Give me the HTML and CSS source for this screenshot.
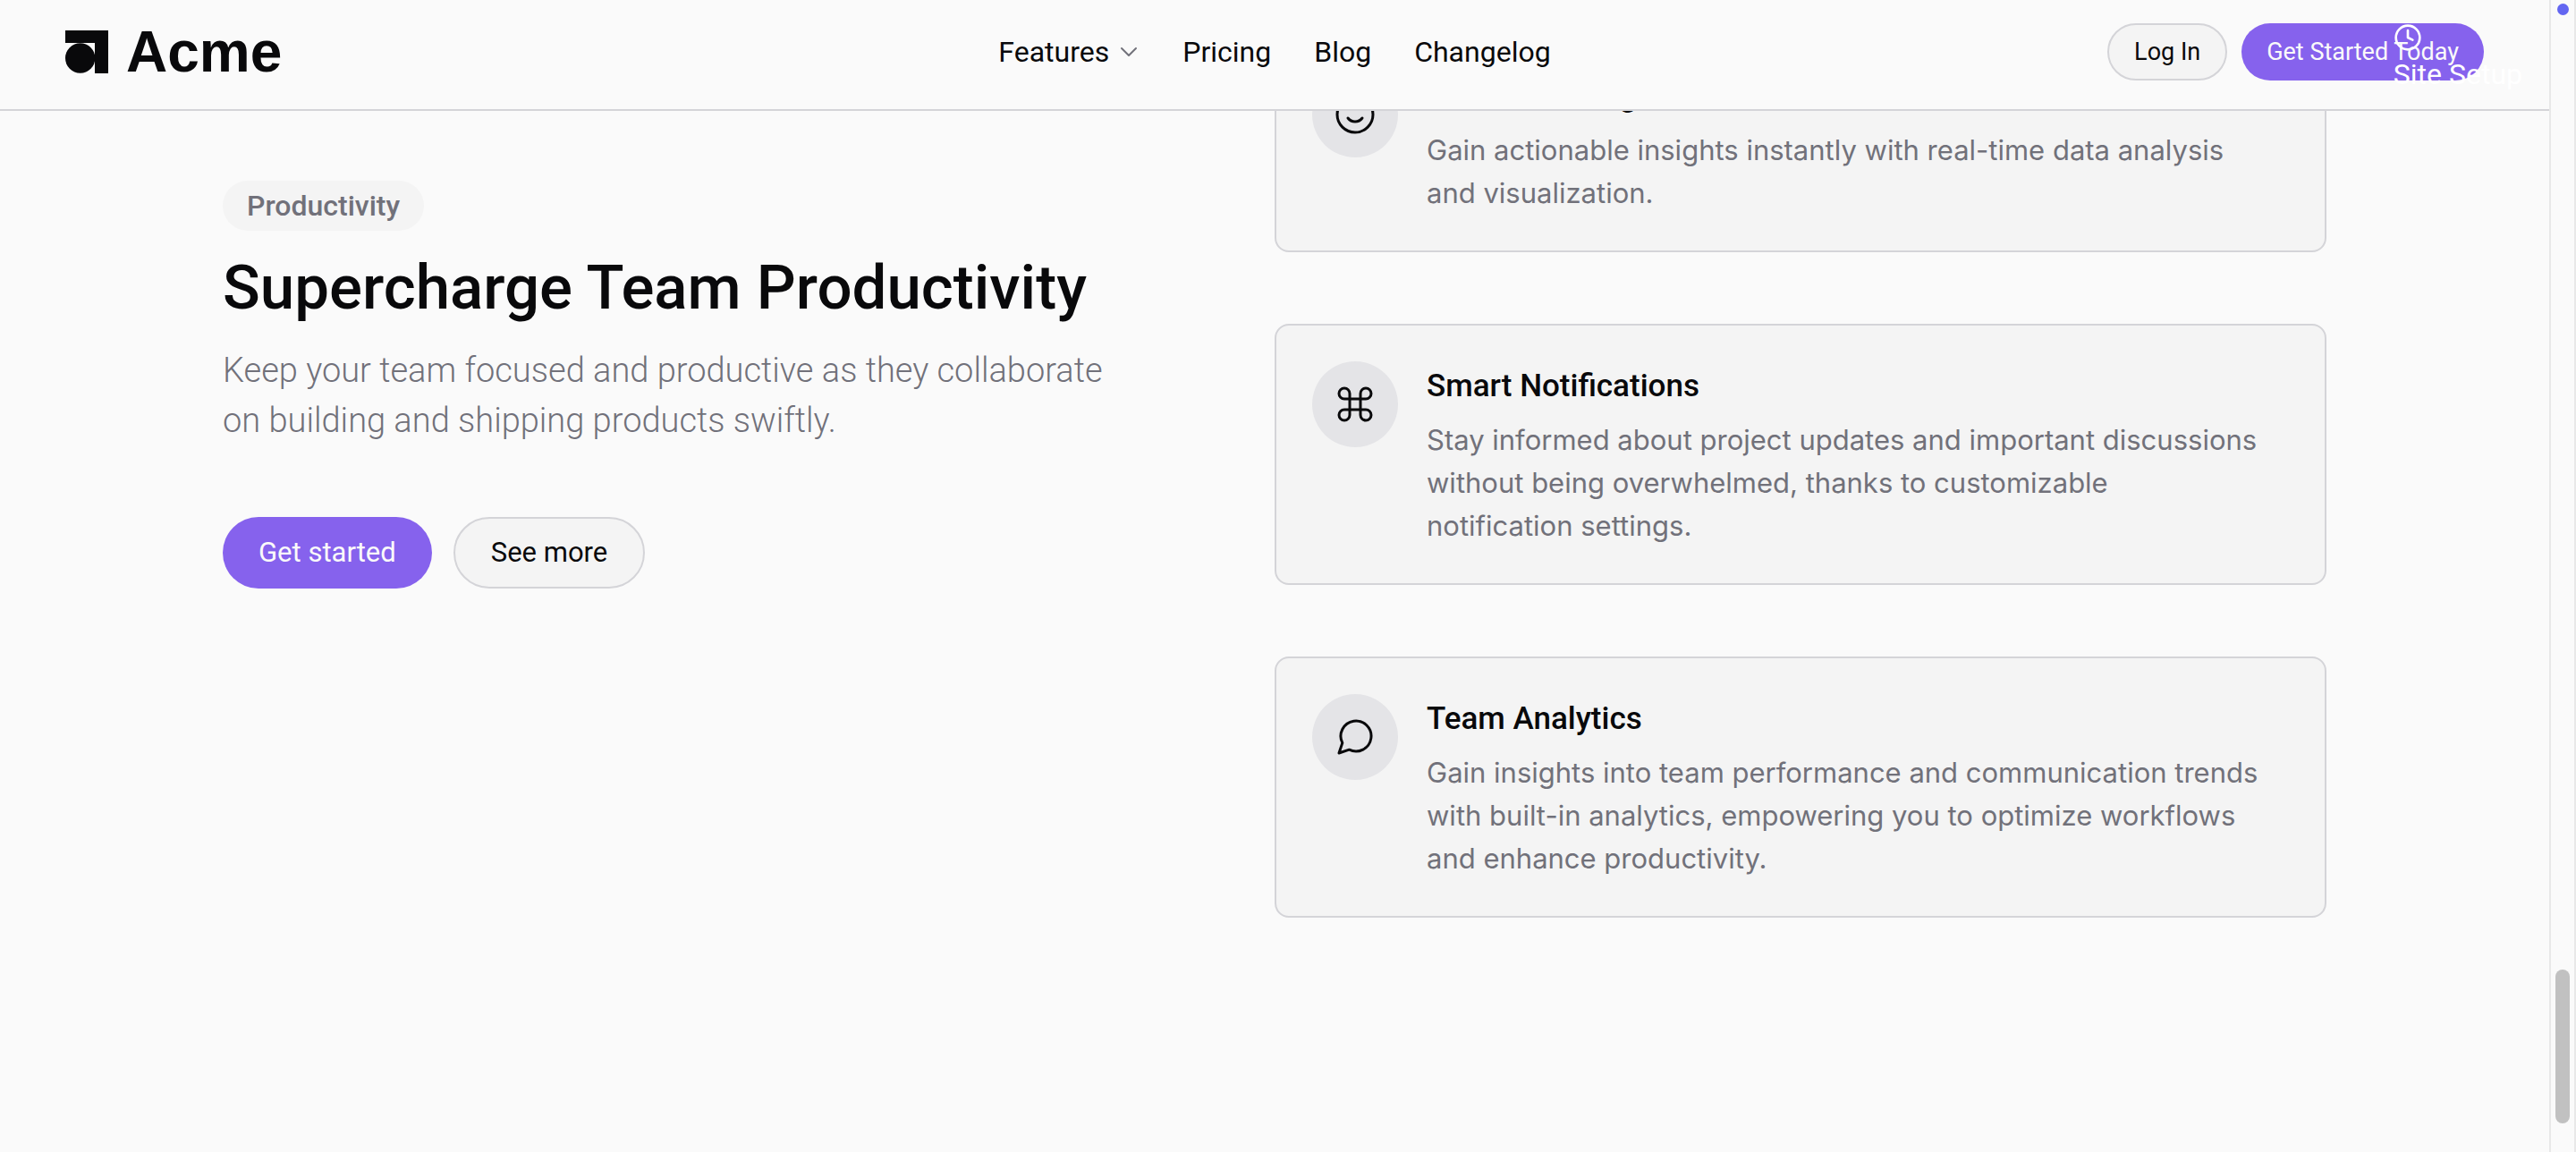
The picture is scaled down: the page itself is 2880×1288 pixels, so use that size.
FILE: index.html
```html
<!DOCTYPE html>
<html lang="en">
<head>
<meta charset="utf-8">
<meta name="viewport" content="width=device-width, initial-scale=1">
<title>Acme</title>
<link rel="stylesheet" href="styles.css">
</head>
<body>
<div class="page">
  <header class="header">
    <a class="brand" href="#">
      <svg class="brand-mark" viewBox="0 0 48 48" aria-hidden="true"><path d="M0 0h48v48H33V14H0z"/><circle cx="16.700" cy="31" r="16.700"/></svg>
      <span>Acme</span>
    </a>
    <nav class="nav">
      <button class="nav-item" type="button">Features
        <svg class="chevron" viewBox="0 0 24 24" aria-hidden="true"><path d="M4 8l8 8 8-8"/></svg>
      </button>
      <a class="nav-item" href="#">Pricing</a>
      <a class="nav-item" href="#">Blog</a>
      <a class="nav-item" href="#">Changelog</a>
    </nav>
    <div class="actions">
      <button class="btn btn-small btn-outline" type="button">Log In</button>
      <button class="btn btn-small btn-primary" type="button">Get Started Today</button>
    </div>
    <a class="site-setup" href="#">
      <svg class="clock" viewBox="0 0 24 24" aria-hidden="true"><circle cx="12" cy="12" r="10"/><path d="M12 6v6l4 2"/></svg>
      <span>Site Setup</span>
    </a>
  </header>

  <main class="feature">
    <section class="intro">
      <span class="badge">Productivity</span>
      <h1 class="title">Supercharge Team Productivity</h1>
      <p class="lead">Keep your team focused and productive as they collaborate on building and shipping products swiftly.</p>
      <div class="intro-actions">
        <button class="btn btn-primary" type="button">Get started</button>
        <button class="btn btn-outline" type="button">See more</button>
      </div>
    </section>

    <section class="cards">
      <article class="card">
        <div class="card-icon"><svg viewBox="0 0 24 24" aria-hidden="true"><circle cx="12" cy="12" r="10"/><path d="M8 14s1.500 2 4 2 4-2 4-2M9 9h.01M15 9h.01"/></svg></div>
        <div class="card-body">
          <h2>Real-time Insights</h2>
          <p>Gain actionable insights instantly with real-time data analysis and visualization.</p>
        </div>
      </article>
      <article class="card">
        <div class="card-icon"><svg viewBox="0 0 24 24" aria-hidden="true"><path d="M15 6v12a3 3 0 1 0 3-3H6a3 3 0 1 0 3 3V6a3 3 0 1 0-3 3h12a3 3 0 1 0-3-3"/></svg></div>
        <div class="card-body">
          <h2>Smart Notifications</h2>
          <p>Stay informed about project updates and important discussions without being overwhelmed, thanks to customizable notification settings.</p>
        </div>
      </article>
      <article class="card">
        <div class="card-icon"><svg viewBox="0 0 24 24" aria-hidden="true"><path d="M3 21l1.900-5.700a8.500 8.500 0 1 1 3.800 3.800z"/></svg></div>
        <div class="card-body">
          <h2>Team Analytics</h2>
          <p>Gain insights into team performance and communication trends with built-in analytics, empowering you to optimize workflows and enhance productivity.</p>
        </div>
      </article>
    </section>
  </main>
</div>
<aside class="rail" aria-hidden="true">
  <span class="rail-dot"></span>
  <span class="rail-thumb"></span>
</aside>
</body>
</html>
```
FILE: styles.css
```css
:root {
  --bg: #fafafa;
  --surface: #f4f4f4;
  --circle: #e4e4e7;
  --border: #d4d4d8;
  --text: #09090b;
  --muted: #71717a;
  --primary: #8662ed;
}

* {
  box-sizing: border-box;
  margin: 0;
}

body {
  display: grid;
  grid-template-columns: 1fr 30px;
  min-height: 100vh;
  overflow: hidden;
  background: var(--bg);
  color: var(--text);
  font: 400 32px/40px Roboto, "Liberation Sans", sans-serif;
}

a {
  color: inherit;
  text-decoration: none;
}

button {
  border: 0;
  background: none;
  color: inherit;
  font: inherit;
  cursor: pointer;
}

svg {
  display: block;
  fill: none;
  stroke: currentColor;
  stroke-width: 2;
  stroke-linecap: round;
  stroke-linejoin: round;
}

.page {
  position: relative;
}

/* Header stays above the scrolled content */
.header {
  position: absolute;
  inset: 0 0 auto;
  z-index: 1;
  display: grid;
  grid-template-columns: 1fr auto 1fr;
  align-items: center;
  padding: 26px 73px 32px;
  border-bottom: 2px solid var(--border);
  background: var(--bg);
}

.brand {
  display: flex;
  align-items: center;
  gap: 20px;
  font: 700 64px/64px "Liberation Sans", Arial, sans-serif;
}

.brand-mark {
  width: 48px;
  height: 48px;
  fill: currentColor;
  stroke: none;
}

.nav {
  display: flex;
  align-items: center;
  gap: 48px;
}

.nav-item {
  display: flex;
  align-items: center;
  gap: 10px;
  padding: 0;
}

.chevron {
  width: 24px;
  height: 24px;
  color: var(--muted);
}

.actions {
  display: flex;
  justify-content: flex-end;
  gap: 16px;
}

.btn {
  height: 80px;
  padding: 0 40px;
  border-radius: 40px;
  font-size: 31px;
  white-space: nowrap;
}

.btn-small {
  height: 64px;
  padding: 0 28px;
  font-size: 27px;
}

.btn-primary {
  background: var(--primary);
  color: #fafafa;
}

.btn-outline {
  border: 2px solid var(--border);
  background: var(--surface);
}

.site-setup {
  position: absolute;
  top: 26px;
  right: 30px;
  display: grid;
  gap: 5px;
  color: #fff;
}

.clock {
  width: 32px;
  height: 32px;
}

.feature {
  display: grid;
  grid-template-columns: 1fr 1fr;
  align-items: start;
  max-width: 2352px;
  margin: 0 auto;
  padding-top: 38px;
}

.intro {
  padding-top: 164px;
}

.badge {
  display: inline-block;
  padding: 8px 27px;
  border-radius: 28px;
  background: var(--surface);
  color: var(--muted);
  font-weight: 500;
  vertical-align: top;
}

.title {
  margin: 24px 0;
  font-size: 69px;
  font-weight: 500;
  line-height: 80px;
}

.lead {
  max-width: 1000px;
  color: var(--muted);
  font-size: 38px;
  font-weight: 300;
  line-height: 56px;
}

.intro-actions {
  display: flex;
  gap: 24px;
  margin-top: 80px;
}

.cards {
  display: grid;
  gap: 80px;
}

.card {
  display: flex;
  gap: 32px;
  padding: 40px;
  border: 2px solid var(--border);
  border-radius: 16px;
  background: var(--surface);
}

.card-icon {
  display: grid;
  flex: none;
  place-items: center;
  width: 96px;
  height: 96px;
  border-radius: 50%;
  background: var(--circle);
}

.card-icon svg {
  width: 48px;
  height: 48px;
  stroke-width: 1.5;
}

.card-body {
  display: grid;
  gap: 8px;
  padding-right: 32px;
}

.card h2 {
  font-size: 35px;
  font-weight: 500;
  line-height: 56px;
}

.card p {
  color: var(--muted);
  font-family: Inter, Roboto, sans-serif;
  font-size: 31px;
  line-height: 48px;
}

.rail {
  display: flex;
  flex-direction: column;
  align-items: center;
  justify-content: space-between;
  padding: 4px 0 32px;
  border: solid #e8e8e8;
  border-width: 0 2px;
}

.rail-dot {
  width: 13px;
  height: 13px;
  border-radius: 50%;
  background: #6366f1;
}

.rail-thumb {
  width: 16px;
  height: 172px;
  border-radius: 8px;
  background: #c1c1c1;
}
```
